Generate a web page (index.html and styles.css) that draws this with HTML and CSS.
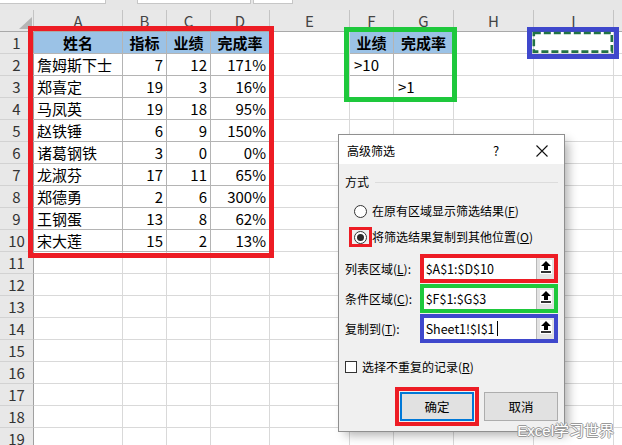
FILE: index.html
```html
<!DOCTYPE html>
<html lang="zh-CN">
<head>
<meta charset="utf-8">
<title>高级筛选</title>
<link rel="stylesheet" href="styles.css">
</head>
<body>
<div class="app">
  <div class="topbar">
    <div class="fbox fb1"></div>
    <div class="fbox fb2"></div>
    <div class="fbox fb3"></div>
  </div>
  <div class="sheet">
    <div class="c ch corner"><svg width="13" height="12" viewBox="0 0 13 12"><polygon points="13,0 13,12 0,12" fill="#b5b5b5"/></svg></div>
    <div class="c ch">A</div><div class="c ch">B</div><div class="c ch">C</div><div class="c ch">D</div><div class="c ch">E</div><div class="c ch">F</div><div class="c ch">G</div><div class="c ch">H</div><div class="c ch">I</div><div class="c ch"></div>

    <div class="c rh">1</div><div class="c t h">姓名</div><div class="c t h">指标</div><div class="c t h">业绩</div><div class="c t h">完成率</div><div class="c"></div><div class="c t h">业绩</div><div class="c t h">完成率</div><div class="c"></div><div class="c"></div><div class="c"></div>
    <div class="c rh">2</div><div class="c t">詹姆斯下士</div><div class="c t n">7</div><div class="c t n">12</div><div class="c t n">171%</div><div class="c"></div><div class="c t crit">&gt;10</div><div class="c t"></div><div class="c"></div><div class="c"></div><div class="c"></div>
    <div class="c rh">3</div><div class="c t">郑喜定</div><div class="c t n">19</div><div class="c t n">3</div><div class="c t n">16%</div><div class="c"></div><div class="c t"></div><div class="c t crit">&gt;1</div><div class="c"></div><div class="c"></div><div class="c"></div>
    <div class="c rh">4</div><div class="c t">马凤英</div><div class="c t n">19</div><div class="c t n">18</div><div class="c t n">95%</div><div class="c"></div><div class="c"></div><div class="c"></div><div class="c"></div><div class="c"></div><div class="c"></div>
    <div class="c rh">5</div><div class="c t">赵铁锤</div><div class="c t n">6</div><div class="c t n">9</div><div class="c t n">150%</div><div class="c"></div><div class="c"></div><div class="c"></div><div class="c"></div><div class="c"></div><div class="c"></div>
    <div class="c rh">6</div><div class="c t">诸葛钢铁</div><div class="c t n">3</div><div class="c t n">0</div><div class="c t n">0%</div><div class="c"></div><div class="c"></div><div class="c"></div><div class="c"></div><div class="c"></div><div class="c"></div>
    <div class="c rh">7</div><div class="c t">龙淑芬</div><div class="c t n">17</div><div class="c t n">11</div><div class="c t n">65%</div><div class="c"></div><div class="c"></div><div class="c"></div><div class="c"></div><div class="c"></div><div class="c"></div>
    <div class="c rh">8</div><div class="c t">郑德勇</div><div class="c t n">2</div><div class="c t n">6</div><div class="c t n">300%</div><div class="c"></div><div class="c"></div><div class="c"></div><div class="c"></div><div class="c"></div><div class="c"></div>
    <div class="c rh">9</div><div class="c t">王钢蛋</div><div class="c t n">13</div><div class="c t n">8</div><div class="c t n">62%</div><div class="c"></div><div class="c"></div><div class="c"></div><div class="c"></div><div class="c"></div><div class="c"></div>
    <div class="c rh">10</div><div class="c t">宋大莲</div><div class="c t n">15</div><div class="c t n">2</div><div class="c t n">13%</div><div class="c"></div><div class="c"></div><div class="c"></div><div class="c"></div><div class="c"></div><div class="c"></div>
    <div class="c rh">11</div><div class="c"></div><div class="c"></div><div class="c"></div><div class="c"></div><div class="c"></div><div class="c"></div><div class="c"></div><div class="c"></div><div class="c"></div><div class="c"></div>
    <div class="c rh">12</div><div class="c"></div><div class="c"></div><div class="c"></div><div class="c"></div><div class="c"></div><div class="c"></div><div class="c"></div><div class="c"></div><div class="c"></div><div class="c"></div>
    <div class="c rh">13</div><div class="c"></div><div class="c"></div><div class="c"></div><div class="c"></div><div class="c"></div><div class="c"></div><div class="c"></div><div class="c"></div><div class="c"></div><div class="c"></div>
    <div class="c rh">14</div><div class="c"></div><div class="c"></div><div class="c"></div><div class="c"></div><div class="c"></div><div class="c"></div><div class="c"></div><div class="c"></div><div class="c"></div><div class="c"></div>
    <div class="c rh">15</div><div class="c"></div><div class="c"></div><div class="c"></div><div class="c"></div><div class="c"></div><div class="c"></div><div class="c"></div><div class="c"></div><div class="c"></div><div class="c"></div>
    <div class="c rh">16</div><div class="c"></div><div class="c"></div><div class="c"></div><div class="c"></div><div class="c"></div><div class="c"></div><div class="c"></div><div class="c"></div><div class="c"></div><div class="c"></div>
    <div class="c rh">17</div><div class="c"></div><div class="c"></div><div class="c"></div><div class="c"></div><div class="c"></div><div class="c"></div><div class="c"></div><div class="c"></div><div class="c"></div><div class="c"></div>
    <div class="c rh">18</div><div class="c"></div><div class="c"></div><div class="c"></div><div class="c"></div><div class="c"></div><div class="c"></div><div class="c"></div><div class="c"></div><div class="c"></div><div class="c"></div>
    <div class="c rh">19</div><div class="c"></div><div class="c"></div><div class="c"></div><div class="c"></div><div class="c"></div><div class="c"></div><div class="c"></div><div class="c"></div><div class="c"></div><div class="c"></div>
  </div>

  <div class="hl hl-list"></div>
  <div class="hl hl-crit"></div>
  <div class="hl hl-dest"></div>
  <svg class="marquee" width="82" height="23" viewBox="0 0 82 23"><rect x="1.8" y="2" width="78" height="18.6" fill="none" stroke="#217346" stroke-width="2.6" stroke-dasharray="7 3"/></svg>

  <div class="dlg">
    <div class="dlg-title">
      <span class="dt">高级筛选</span>
      <span class="help">?</span>
      <svg class="close" width="12" height="12" viewBox="0 0 12 12"><path d="M0.5 0.5L11.5 11.5M11.5 0.5L0.5 11.5" stroke="#111" stroke-width="1.1"/></svg>
    </div>
    <div class="dlg-body">
      <div class="group"><span>方式</span><span class="gline"></span></div>
      <div class="opt opt1"><span class="radwrap"><span class="radio"></span></span><span>在原有区域显示筛选结果(<u>F</u>)</span></div>
      <div class="opt opt2"><span class="radwrap mark"><span class="radio on"></span></span><span>将筛选结果复制到其他位置(<u>O</u>)</span></div>
      <div class="fields">
        <div class="field">
          <span class="lbl">列表区域(<u>L</u>):</span>
          <div class="ref ref-red"><span class="val">$A$1:$D$10</span><span class="rbtn"><svg width="10" height="12" viewBox="0 0 10 12"><polygon points="5,0 10,5 7,5 7,9 3,9 3,5 0,5" fill="#000"/><rect x="0" y="10.2" width="10" height="1.6" fill="#000"/></svg></span></div>
        </div>
        <div class="field">
          <span class="lbl">条件区域(<u>C</u>):</span>
          <div class="ref ref-green"><span class="val">$F$1:$G$3</span><span class="rbtn"><svg width="10" height="12" viewBox="0 0 10 12"><polygon points="5,0 10,5 7,5 7,9 3,9 3,5 0,5" fill="#000"/><rect x="0" y="10.2" width="10" height="1.6" fill="#000"/></svg></span></div>
        </div>
        <div class="field">
          <span class="lbl">复制到(<u>T</u>):</span>
          <div class="ref ref-blue"><span class="val">Sheet1!$I$1<span class="caret"></span></span><span class="rbtn"><svg width="10" height="12" viewBox="0 0 10 12"><polygon points="5,0 10,5 7,5 7,9 3,9 3,5 0,5" fill="#000"/><rect x="0" y="10.2" width="10" height="1.6" fill="#000"/></svg></span></div>
        </div>
      </div>
      <div class="chk"><span class="cbox"></span><span>选择不重复的记录(<u>R</u>)</span></div>
      <div class="btns">
        <div class="okwrap"><div class="btn ok">确定</div></div>
        <div class="btn">取消</div>
      </div>
    </div>
  </div>

  <div class="wm">Excel学习世界</div>
</div>
</body>
</html>
```

FILE: styles.css
```css
* { box-sizing: border-box; }
html, body { margin: 0; padding: 0; }
body {
  width: 622px;
  height: 445px;
  overflow: hidden;
  background: #fff;
  font-family: "Noto Sans CJK SC", "Noto Sans", sans-serif;
}
.app {
  position: relative;
  width: 622px;
  height: 445px;
  overflow: hidden;
}

/* formula bar remnants */
.topbar {
  height: 10px;
  background: #e6e6e6;
  display: flex;
  align-items: flex-start;
}
.fbox {
  height: 4px;
  background: #fff;
  border-bottom: 1px solid #c6c6c6;
}
.fb1 { width: 106px; border-right: 1px solid #c6c6c6; }
.fb2 { width: 114px; margin-left: 31px; border-left: 1px solid #c6c6c6; border-right: 1px solid #c6c6c6; }
.fb3 { width: 40px; margin-left: 2px; border-left: 1px solid #c6c6c6; border-right: 1px solid #c6c6c6; }

/* sheet grid */
.sheet {
  display: grid;
  grid-template-columns: 34px 89px 44px 44px 59px 80px 44px 60px 80px 80px 80px;
  grid-auto-rows: 22px;
}
.c {
  border-right: 1px solid #d9d9d9;
  border-bottom: 1px solid #d9d9d9;
  font-size: 15px;
  line-height: 21px;
  padding: 0 3px;
  white-space: nowrap;
  overflow: hidden;
  color: #000;
}
.ch {
  background: #e8e8e8;
  border-right-color: #c4c4c4;
  border-bottom-color: #a9a9a9;
  text-align: center;
  color: #444;
  padding: 0;
}
.corner {
  display: flex;
  align-items: flex-end;
  justify-content: flex-end;
  padding: 0 1px 2px 0;
}
.rh {
  background: #e8e8e8;
  border-right-color: #a0a0a0;
  border-bottom-color: #d2d2d2;
  text-align: center;
  color: #333;
  padding: 0;
}
.t {
  border-right-color: #b4b4b4;
  border-bottom-color: #b4b4b4;
}
.h {
  background: #9bc2e6;
  font-weight: bold;
  text-align: center;
}
.n { text-align: right; }
.crit { padding-left: 4px; }

/* coloured highlight boxes drawn over the sheet */
.hl { position: absolute; border: 5px solid; }
.hl-list { left: 28px; top: 26px; width: 246px; height: 232px; border-color: #ed1c24; }
.hl-crit { left: 344px; top: 27px; width: 113px; height: 75px; border-color: #1ec83c; }
.hl-dest { left: 527px; top: 27px; width: 92px; height: 32px; border-color: #3f48cc; }
.marquee { position: absolute; left: 532px; top: 31px; }

/* dialog window */
.dlg {
  position: absolute;
  left: 338px;
  top: 134px;
  width: 227px;
  height: 298px;
  border: 1px solid #8f8f8f;
  background: #f0f0f0;
  box-shadow: 5px 5px 10px -2px rgba(0, 0, 0, 0.32);
  font-size: 12px;
  color: #000;
}
.dlg-title {
  height: 29px;
  background: #fff;
  display: flex;
  align-items: center;
  padding: 2px 0 0 8px;
}
.dt { flex: 1; font-size: 12px; }
.help { width: 14px; text-align: center; font-size: 13px; margin-right: 33px; }
.close { margin-right: 16px; }
.dlg-body {
  padding: 0 6px;
  display: flex;
  flex-direction: column;
}
.group {
  display: flex;
  align-items: center;
  height: 16px;
  margin-top: 10px;
  line-height: 16px;
}
.gline { flex: 1; height: 1px; background: #dcdcdc; margin-left: 6px; }
.opt {
  display: flex;
  align-items: center;
  height: 20px;
  line-height: 16px;
}
.opt1 { margin-top: 11px; }
.opt2 { margin-top: 6px; }
.radwrap {
  width: 23px;
  height: 20px;
  margin-left: 4px;
  border: 3px solid transparent;
  display: flex;
  align-items: center;
  justify-content: center;
}
.radwrap.mark { border-color: #ed1c24; }
.radio {
  width: 13px;
  height: 13px;
  border-radius: 50%;
  border: 1px solid #333;
  background: #fff;
  display: flex;
  align-items: center;
  justify-content: center;
}
.radio.on::after {
  content: "";
  width: 7px;
  height: 7px;
  border-radius: 50%;
  background: #2b2b2b;
}
.fields {
  margin-top: 7px;
  display: flex;
  flex-direction: column;
  gap: 1px;
}
.field {
  display: flex;
  align-items: center;
  height: 29px;
}
.lbl { width: 75px; white-space: nowrap; }
.ref {
  width: 139px;
  height: 29px;
  border: 4px solid;
  background: #fff;
  display: flex;
}
.ref-red { border-color: #ed1c24; }
.ref-green { border-color: #1ec83c; }
.ref-blue { border-color: #3f48cc; }
.val {
  flex: 1;
  padding-left: 2px;
  line-height: 21px;
  font-size: 12.5px;
  white-space: nowrap;
  display: flex;
  align-items: center;
}
.caret { width: 1px; height: 15px; background: #000; margin-left: 2px; }
.rbtn {
  width: 18px;
  background: #e3e3e3;
  border-left: 1px solid #b9b9b9;
  display: flex;
  justify-content: center;
  align-items: flex-start;
  padding-top: 3px;
}
.rbtn svg { background: #fff; box-shadow: 0 0 0 1px #fff; }
.chk {
  display: flex;
  align-items: center;
  height: 16px;
  margin-top: 16px;
  line-height: 16px;
}
.cbox {
  width: 12px;
  height: 12px;
  border: 1px solid #333;
  background: #fff;
  margin-right: 5px;
}
.btns {
  margin-top: 12px;
  display: flex;
  justify-content: flex-end;
  align-items: center;
  gap: 5px;
}
.okwrap {
  border: 4px solid #ed1c24;
  padding: 1px;
}
.btn {
  width: 74px;
  height: 29px;
  background: #e1e1e1;
  border: 1px solid #adadad;
  display: flex;
  align-items: center;
  justify-content: center;
  font-size: 12.5px;
}
.btn.ok { border: 2px solid #0078d7; }

/* watermark over the corner */
.wm {
  position: absolute;
  right: 8px;
  bottom: 5px;
  font-family: "Liberation Sans", "Noto Sans CJK SC", sans-serif;
  font-size: 15px;
  line-height: 18px;
  color: #fff;
  text-shadow: 1px 0 0 #9a9a9a, -1px 0 0 #9a9a9a, 0 1px 0 #9a9a9a, 0 -1px 0 #9a9a9a;
}
```
